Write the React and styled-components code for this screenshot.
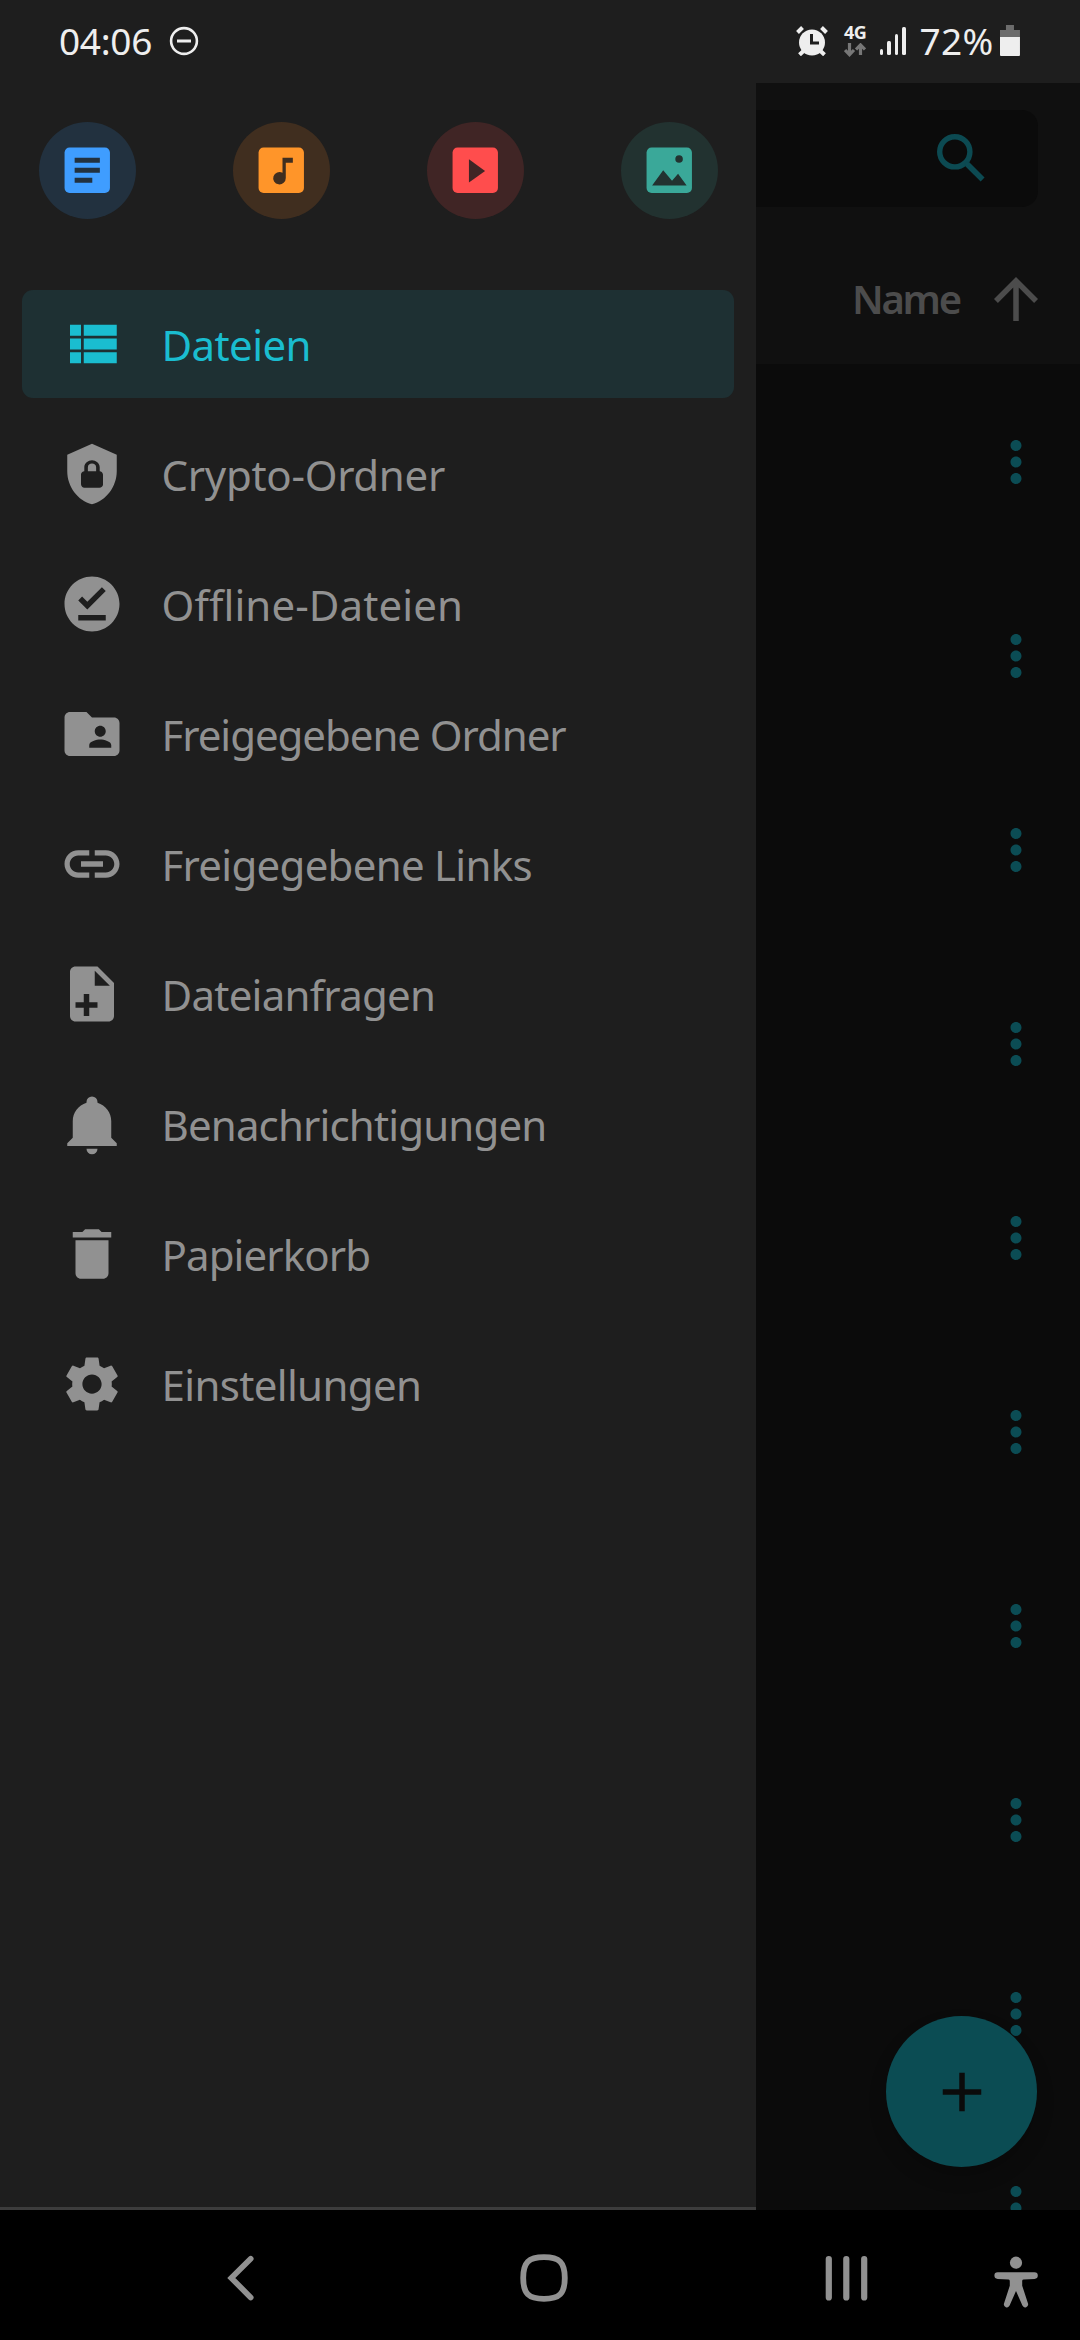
import React from "react";
import styled, { createGlobalStyle } from "styled-components";

const menu = [
    { label: "Dateien", icon: "list", spacing: -0.6, active: true },
    { label: "Crypto-Ordner", icon: "shield", spacing: -0.3 },
    { label: "Offline-Dateien", icon: "offline", spacing: 0.1 },
    { label: "Freigegebene Ordner", icon: "folder", spacing: -1.05 },
    { label: "Freigegebene Links", icon: "link", spacing: -0.72 },
    { label: "Dateianfragen", icon: "file", spacing: -0.75 },
    { label: "Benachrichtigungen", icon: "bell", spacing: -0.85 },
    { label: "Papierkorb", icon: "trash", spacing: -0.9 },
    { label: "Einstellungen", icon: "cog", spacing: -0.65 },
];

const icons = {
    list: "M4 14h4v-4H4v4zm0 5h4v-4H4v4zM4 9h4V5H4v4zm5 5h12v-4H9v4zm0 5h12v-4H9v4zM9 5v4h12V5H9z",
    shield: "M12,1L3,5V11C3,16.55 6.84,21.74 12,23C17.16,21.74 21,16.55 21,11V5L12,1M12,7C13.4,7 14.8,8.1 14.8,9.5V11C15.4,11 16,11.6 16,12.3V15.8C16,16.4 15.4,17 14.7,17H9.2C8.6,17 8,16.4 8,15.7V12.2C8,11.6 8.6,11 9.2,11V9.5C9.2,8.1 10.6,7 12,7M12,8.2C11.2,8.2 10.5,8.7 10.5,9.5V11H13.5V9.5C13.5,8.7 12.8,8.2 12,8.2Z",
    offline: "M12 2C6.5 2 2 6.5 2 12s4.5 10 10 10 10-4.5 10-10S17.5 2 12 2zm5 16H7v-2h10v2zm-6.7-4L7 10.7l1.4-1.4 1.9 1.9 5.3-5.3L17 7.3 10.3 14z",
    folder: "M20 6h-8l-2-2H4c-1.1 0-1.99.9-1.99 2L2 18c0 1.1.9 2 2 2h16c1.1 0 2-.9 2-2V8c0-1.1-.9-2-2-2zm-5 3c1.1 0 2 .9 2 2s-.9 2-2 2-2-.9-2-2 .9-2 2-2zm4 8h-8v-1c0-1.33 2.67-2 4-2s4 .67 4 2v1z",
    link: "M3.9 12c0-1.71 1.39-3.1 3.1-3.1h4V7H7c-2.76 0-5 2.24-5 5s2.24 5 5 5h4v-1.9H7c-1.71 0-3.1-1.39-3.1-3.1zM8 13h8v-2H8v2zm9-6h-4v1.9h4c1.71 0 3.1 1.39 3.1 3.1s-1.39 3.1-3.1 3.1h-4V17h4c2.76 0 5-2.24 5-5s-2.24-5-5-5z",
    file: "M14 2H6C4.89 2 4 2.89 4 4V20C4 21.11 4.89 22 6 22H18C19.11 22 20 21.11 20 20V8L14 2M13 3.5L18.5 9H13V3.5M11 15V12H9V15H6V17H9V20H11V17H14V15H11Z",
    bell: "M21,19V20H3V19L5,17V11C5,7.9 7.03,5.17 10,4.29C10,4.19 10,4.1 10,4A2,2 0 0,1 12,2A2,2 0 0,1 14,4C14,4.1 14,4.19 14,4.29C16.97,5.17 19,7.9 19,11V17L21,19M14,21A2,2 0 0,1 12,23A2,2 0 0,1 10,21",
    trash: "M6 19c0 1.1.9 2 2 2h8c1.1 0 2-.9 2-2V7H6v12zM19 4h-3.5l-1-1h-5l-1 1H5v2h14V4z",
    cog: "M19.14 12.94c.04-.3.06-.61.06-.94 0-.32-.02-.64-.07-.94l2.03-1.58c.18-.14.23-.41.12-.61l-1.92-3.32c-.12-.22-.37-.29-.59-.22l-2.39.96c-.5-.38-1.03-.7-1.62-.94l-.36-2.54c-.04-.24-.24-.41-.48-.41h-3.84c-.24 0-.43.17-.47.41l-.36 2.54c-.59.24-1.13.57-1.62.94l-2.39-.96c-.22-.08-.47 0-.59.22L2.74 8.87c-.12.21-.08.47.12.61l2.03 1.58c-.05.3-.09.63-.09.94s.02.64.07.94l-2.03 1.58c-.18.14-.23.41-.12.61l1.92 3.32c.12.22.37.29.59.22l2.39-.96c.5.38 1.03.7 1.62.94l.36 2.54c.05.24.24.41.48.41h3.84c.24 0 .44-.17.47-.41l.36-2.54c.59-.24 1.13-.56 1.62-.94l2.39.96c.22.08.47 0 .59-.22l1.92-3.32c.12-.22.07-.47-.12-.61l-2.02-1.58zM12 15.5c-1.93 0-3.5-1.57-3.5-3.5s1.57-3.5 3.5-3.5 3.5 1.57 3.5 3.5-1.57 3.5-3.5 3.5z",
    arrow: "M4 12l1.41 1.41L11 7.83V20h2V7.83l5.58 5.59L20 12l-8-8-8 8z",
    dots: "M12 8c1.1 0 2-.9 2-2s-.9-2-2-2-2 .9-2 2 .9 2 2 2zm0 2c-1.1 0-2 .9-2 2s.9 2 2 2 2-.9 2-2-.9-2-2-2zm0 6c-1.1 0-2 .9-2 2s.9 2 2 2 2-.9 2-2-.9-2-2-2z",
    plus: "M19 13h-6v6h-2v-6H5v-2h6V5h2v6h6v2z",
};

const tile = "M5 3h14a2 2 0 0 1 2 2v14a2 2 0 0 1-2 2H5a2 2 0 0 1-2-2V5a2 2 0 0 1 2-2z";

const shortcuts = [
    { name: "Dokumente", color: "#3f9dff", back: "#22313f", cut: "M7 7h10v2H7zM7 11h10v2H7zM7 15h7v2H7z" },
    { name: "Musik", color: "#ff9529", back: "#402e1f", cut: "M12.5 7h4.1v2h-2.8v6.1a2.5 2.45 0 1 1-1.3-2.1z" },
    { name: "Videos", color: "#ff4d4d", back: "#402525", cut: "M9.5 7.6v9.3l6.4-4.6z" },
    { name: "Bilder", color: "#3aa899", back: "#223230", cut: "M5.2 18l4.4-6 3.5 4.2 2.4-2.8 3.4 4.6zM14.4 7.5a1.5 1.5 0 1 0 3 0 1.5 1.5 0 1 0-3 0z" },
];

const Icon = ({ name }) => (
    <MenuIcon viewBox="0 0 24 24">
        <path fillRule="evenodd" d={icons[name]} />
    </MenuIcon>
);

const StatusBar = () => (
    <Status>
        <Clock>04:06</Clock>
        <Disturb viewBox="0 0 30 30">
            <circle cx="15" cy="15" r="12.9" fill="none" stroke="#eee" strokeWidth="2.6" />
            <path d="M8 15h14" stroke="#eee" strokeWidth="3" />
        </Disturb>
        <Alarm viewBox="0 0 32 30">
            <circle cx="16" cy="16.5" r="13" fill="#eee" />
            <path d="M1.5 6.5l5-5M30.5 6.5l-5-5" stroke="#eee" strokeWidth="4" />
            <path d="M7.5 25l-4 3.8M24.5 25l4 3.8" stroke="#eee" strokeWidth="4" />
            <path d="M15.5 8v9h7.5" fill="none" stroke="#1e1e1e" strokeWidth="3" />
        </Alarm>
        <Network>
            <span>4G</span>
            <svg width="22" height="14" viewBox="0 0 22 14" fill="none" stroke="#777" strokeWidth="3.2">
                <path d="M5.5 0v11M1 7l4.5 4.6L10 7M16.5 12V2M12 6.5l4.5-4.6L21 6.5" />
            </svg>
        </Network>
        <Signal>
            <Bar $height={6} />
            <Bar $height={14} />
            <Bar $height={21} />
            <Bar $height={28} />
        </Signal>
        <Percent>72%</Percent>
        <Battery />
    </Status>
);

const App = () => {
    return (
        <Screen>
            <GlobalStyle />
            <StatusBar />
            <Content>
                <Drawer>
                    <Shortcuts>
                        {shortcuts.map((item) => (
                            <Shortcut key={item.name} $back={item.back}>
                                <svg width="60.5" height="60.5" viewBox="0 0 24 24">
                                    <path d={tile} fill={item.color} />
                                    <path d={item.cut} fill={item.back} />
                                </svg>
                            </Shortcut>
                        ))}
                    </Shortcuts>
                    <Menu>
                        {menu.map((item) => (
                            <MenuItem key={item.label} $active={item.active}>
                                <Icon name={item.icon} />
                                <Label $spacing={item.spacing}>{item.label}</Label>
                            </MenuItem>
                        ))}
                    </Menu>
                </Drawer>
                <Files>
                    <Toolbar>
                        <Search>
                            <svg width="48" height="48" viewBox="0 0 48 48" fill="none" stroke="#0c4a52">
                                <circle cx="17.8" cy="17.8" r="15.1" strokeWidth="5.4" />
                                <path d="M29.8 29.8L45.6 45.6" strokeWidth="5.6" />
                                <path d="M29 31.5L31.5 29" strokeWidth="4" />
                            </svg>
                        </Search>
                        <Sort>
                            <span>Name</span>
                            <Icon name="arrow" />
                        </Sort>
                    </Toolbar>
                    <List>
                        {[...Array(10)].map((_, i) => (
                            <FileRow key={i}>
                                <Icon name="dots" />
                            </FileRow>
                        ))}
                    </List>
                    <AddButton>
                        <Icon name="plus" />
                    </AddButton>
                </Files>
            </Content>
            <NavBar>
                <NavIcon $left={223} width="32" height="50" viewBox="0 0 32 50">
                    <path d="M27.7 5.7L8.3 25L27.7 44.4" strokeWidth="5.7" />
                </NavIcon>
                <NavIcon $left={264} width="50" height="50" viewBox="0 0 50 50">
                    <path d="M25 4.2C40.5 4.2 45.8 9.5 45.8 25S40.5 45.8 25 45.8 4.2 40.5 4.2 25 9.5 4.2 25 4.2z" strokeWidth="5.8" />
                </NavIcon>
                <NavIcon $left={256} width="44" height="50" viewBox="0 0 44 50">
                    <path d="M3.8 6v38.5M21.3 6v38.5M39.2 6v38.5" strokeWidth="6.2" />
                </NavIcon>
                <NavIcon $left={124} width="46" height="56" viewBox="0 0 46 56">
                    <g fill="#919191" stroke="none">
                        <circle cx="23" cy="9.7" r="6.1" />
                        <path d="M4.7 19.3h36.8a3.3 3.3 0 0 1 0 6.6L30.5 26.4c-1.3.1-1.3 1-1.3 2.3v4L35 50.5a3 3 0 0 1-5.6 2.1L23 38l-6.400 14.600A3 3 0 0 1 11 50.5l5.800-17.800v-4c0-1.300 0-2.200-1.300-2.300L4.7 25.9a3.3 3.3 0 0 1 0-6.6z" />
                    </g>
                </NavIcon>
            </NavBar>
        </Screen>
    );
};

const GlobalStyle = createGlobalStyle`
    * {
        box-sizing: border-box;
    }
    body {
        margin: 0;
        background: #000;
        font-family: "Noto Sans", "Open Sans", sans-serif;
    }
    svg {
        display: block;
        flex: none;
    }
`;
const Screen = styled.div`
    width: 1080px;
    height: 2340px;
    display: flex;
    flex-direction: column;
    overflow: hidden;
    white-space: nowrap;
`;
const Status = styled.header`
    height: 83px;
    display: flex;
    align-items: center;
    padding: 0 59px 2px;
    background: #1e1e1e;
    color: #eee;
`;
const Clock = styled.span`
    width: 110px;
    font-size: 37px;
    letter-spacing: -0.3px;
`;
const Disturb = styled.svg`
    width: 30px;
    height: 30px;
`;
const Alarm = styled.svg`
    width: 32px;
    height: 30px;
    margin-left: 597px;
`;
const Network = styled.div`
    width: 24px;
    margin-left: 16px;
    display: flex;
    flex-direction: column;
    gap: 4px;
    padding-top: 2px;
    span {
        font-size: 18px;
        font-weight: 700;
        line-height: 13px;
        letter-spacing: -0.5px;
    }
`;
const Signal = styled.div`
    display: flex;
    align-items: flex-end;
    gap: 4px;
    margin-left: 12px;
    padding-top: 1px;
`;
const Bar = styled.i`
    width: 3.4px;
    height: ${(props) => props.$height}px;
    border-radius: 1.5px;
    background: #eee;
`;
const Percent = styled.span`
    width: 80.4px;
    margin-left: 14px;
    font-size: 37px;
    letter-spacing: 0.3px;
`;
const Battery = styled.i`
    width: 20px;
    height: 31px;
    flex: none;
    border-radius: 1px;
    background: linear-gradient(#6c6c6c 12px, #eee 12px);
    clip-path: polygon(0 5px, 6px 5px, 6px 0, 14px 0, 14px 5px, 100% 5px, 100% 100%, 0 100%);
`;
const Content = styled.div`
    height: 2127px;
    display: flex;
`;
const Drawer = styled.aside`
    width: 756px;
    background: #1e1e1e;
    border-bottom: 3px solid #3c3c3c;
`;
const Shortcuts = styled.div`
    display: flex;
    gap: 97px;
    padding: 39px 39px 71px;
`;
const Shortcut = styled.div`
    width: 97px;
    height: 97px;
    flex: none;
    display: flex;
    align-items: center;
    justify-content: center;
    border-radius: 50%;
    background: ${(props) => props.$back};
`;
const Menu = styled.nav`
    display: flex;
    flex-direction: column;
    gap: 22px;
    padding: 0 22px;
`;
const MenuIcon = styled.svg`
    width: 66px;
    height: 66px;
    fill: currentColor;
`;
const MenuItem = styled.div`
    height: 108px;
    display: flex;
    align-items: center;
    gap: 37px;
    padding-left: 36.5px;
    border-radius: 11px;
    background: ${(props) => (props.$active ? "#1e3033" : "transparent")};
    color: ${(props) => (props.$active ? "#1abdd0" : "#919191")};
    svg {
        margin-bottom: 1px;
    }
`;
const Label = styled.span`
    font-size: 42px;
    letter-spacing: ${(props) => props.$spacing}px;
`;
const Files = styled.main`
    flex: 1;
    position: relative;
    overflow: hidden;
    background: #0b0b0b;
`;
const Toolbar = styled.div`
    height: 281px;
    padding-top: 27px;
    background: #101010;
`;
const Search = styled.div`
    height: 97px;
    margin-right: 42px;
    padding: 24px 53px 0 0;
    display: flex;
    justify-content: flex-end;
    border-radius: 0 16px 16px 0;
    background: #0b0b0b;
`;
const Sort = styled.div`
    display: flex;
    align-items: center;
    justify-content: flex-end;
    gap: 22.5px;
    margin-top: 58.5px;
    padding-right: 31.5px;
    color: #4c4c4c;
    span {
        font-size: 40px;
        font-weight: 600;
        letter-spacing: -2.2px;
    }
`;
const List = styled.div`
    display: flex;
    flex-direction: column;
`;
const FileRow = styled.div`
    height: 194px;
    flex: none;
    display: flex;
    align-items: center;
    justify-content: flex-end;
    padding: 1px 31.5px 0 0;
    color: #0b4c54;
`;
const AddButton = styled.button`
    position: absolute;
    right: 43px;
    bottom: 43px;
    width: 151px;
    height: 151px;
    display: flex;
    align-items: center;
    justify-content: center;
    padding: 0;
    border: 0;
    border-radius: 50%;
    background: #0b4c53;
    color: #0b0b0b;
    box-shadow: 0 10px 18px rgba(0, 0, 0, 0.18);
`;
const NavBar = styled.footer`
    height: 130px;
    display: flex;
    align-items: flex-start;
    padding-top: 43px;
    background: #000;
`;
const NavIcon = styled.svg`
    margin-left: ${(props) => props.$left}px;
    fill: none;
    stroke: #919191;
    stroke-linecap: round;
`;

export default App;
